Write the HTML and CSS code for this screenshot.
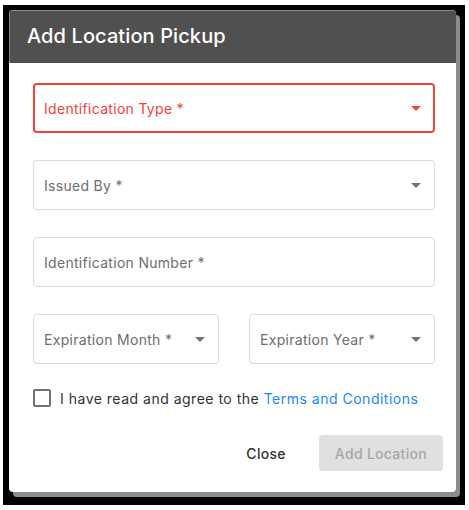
FILE: index.html
```html
<!DOCTYPE html>
<html lang="en">
<head>
    <meta charset="UTF-8">
    <meta name="viewport" content="width=device-width, initial-scale=1.0">
    <title>Add Location Pickup</title>
    <link rel="stylesheet" href="styles.css">
</head>
<body>
    <div class="backdrop">
        <div class="dialog">
            <div class="dialog-title">Add Location Pickup</div>
            <form class="dialog-body">
                <div class="field select error">
                    <span class="label">Identification Type *</span>
                    <span class="arrow"></span>
                </div>
                <div class="field select">
                    <span class="label">Issued By *</span>
                    <span class="arrow"></span>
                </div>
                <div class="field">
                    <span class="label">Identification Number *</span>
                </div>
                <div class="row">
                    <div class="field select">
                        <span class="label">Expiration Month *</span>
                        <span class="arrow"></span>
                    </div>
                    <div class="field select">
                        <span class="label">Expiration Year *</span>
                        <span class="arrow"></span>
                    </div>
                </div>
                <label class="agree">
                    <span class="checkbox"></span>
                    <span>I have read and agree to the <a href="#">Terms and Conditions</a></span>
                </label>
            </form>
            <div class="dialog-actions">
                <button type="button" class="btn-text">Close</button>
                <button type="button" class="btn-primary" disabled>Add Location</button>
            </div>
        </div>
    </div>
</body>
</html>
```

FILE: styles.css
```css
body {
    margin: 0;
    background: #fff;
    font-family: Inter, "Open Sans", sans-serif;
}

.backdrop {
    width: 462px;
    height: 500px;
    margin: 5px 0 0 3px;
    padding: 5px 0 0 6px;
    box-sizing: border-box;
    background: #000;
}

.dialog {
    width: 447px;
    height: 482px;
    background: #fff;
    border-radius: 4px;
    overflow: hidden;
    box-shadow: 4px 5px 0 #8c8c8c;
    display: flex;
    flex-direction: column;
}

.dialog-title {
    height: 53px;
    box-sizing: border-box;
    padding: 13px 17px 0;
    background: #505050;
    border-top: 1px solid #8a8a8a;
    border-left: 1px solid #8a8a8a;
    color: #fff;
    font-size: 20px;
    font-weight: 500;
    letter-spacing: 0.1px;
}

.dialog-body {
    padding: 20px 21px 0 24px;
    display: flex;
    flex-direction: column;
    gap: 27px;
}

.field {
    height: 50px;
    box-sizing: border-box;
    border: 1px solid #dcdcdc;
    border-radius: 4px;
    padding: 0 13px 0 10px;
    display: flex;
    align-items: center;
    justify-content: space-between;
    color: #6e6e6e;
    font-size: 14px;
    letter-spacing: 0.3px;
}

.field.error {
    border: 2px solid #f44336;
    padding: 0 12px 0 9px;
    color: #f44336;
}

.arrow {
    width: 0;
    height: 0;
    border-left: 5px solid transparent;
    border-right: 5px solid transparent;
    border-top: 5px solid #757575;
}

.field.error .arrow {
    border-top-color: #f44336;
}

.row {
    display: flex;
    gap: 30px;
}

.row .field {
    flex: 1;
}

.agree {
    display: flex;
    align-items: center;
    gap: 9px;
    margin-top: -2px;
    color: #333;
    font-size: 14px;
    letter-spacing: 0.5px;
}

.checkbox {
    width: 18px;
    height: 18px;
    box-sizing: border-box;
    border: 2px solid #737373;
    border-radius: 2px;
}

.agree a {
    color: #1a88ff;
    text-decoration: none;
}

.dialog-actions {
    display: flex;
    justify-content: flex-end;
    align-items: center;
    gap: 17px;
    padding: 28px 13px 0 0;
}

.dialog-actions button {
    font-family: inherit;
    font-size: 14px;
    font-weight: 500;
    letter-spacing: 0.3px;
    border: none;
    border-radius: 4px;
    height: 36px;
    padding: 0 16px;
}

.btn-text {
    background: none;
    color: #333;
}

.btn-primary {
    background: #e0e0e0;
    color: #a6a6a6;
}
```
